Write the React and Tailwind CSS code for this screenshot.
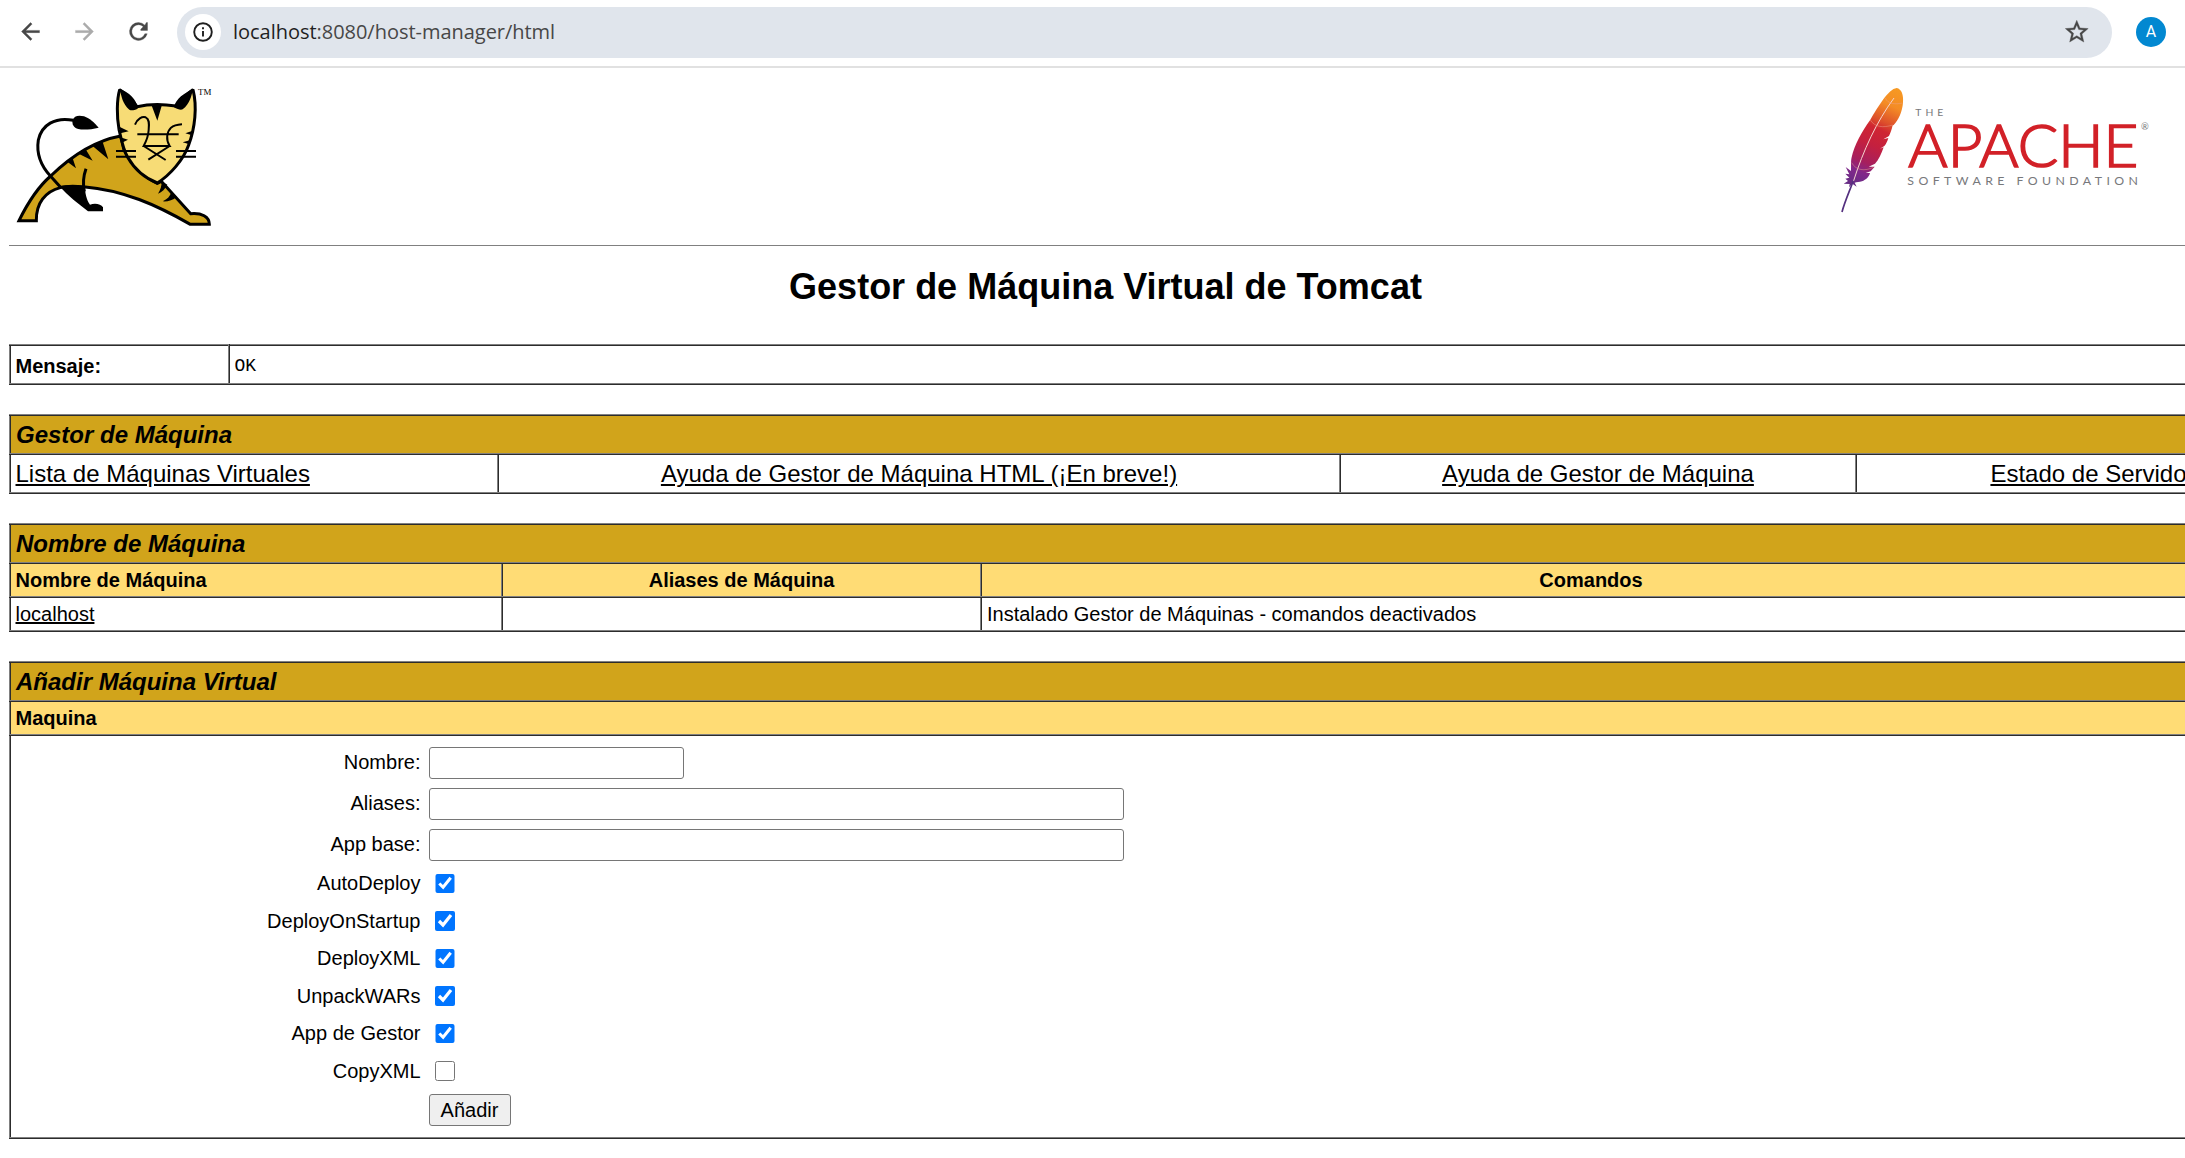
import React from "react";

const CELL = "border-2 border-[#808080] [border-style:ridge] px-[4.5px] py-0 align-middle whitespace-nowrap";

function Icon({ d, size, className }) {
  return (
    <svg width={size} height={size} viewBox="0 0 24 24" fill="currentColor" stroke="currentColor" strokeWidth="0.3" className={className}>
      <path d={d} />
    </svg>
  );
}

const BACK = "M20 11H7.83l5.59-5.59L12 4l-8 8 8 8 1.41-1.41L7.83 13H20v-2z";
const FORWARD = "M12 4l-1.41 1.41L16.17 11H4v2h12.17l-5.58 5.59L12 20l8-8z";
const RELOAD = "M17.65 6.35A7.96 7.96 0 0 0 12 4a8 8 0 1 0 7.73 10h-2.08A5.99 5.99 0 1 1 12 6c1.66 0 3.14.69 4.22 1.78L14 10v1h6V4h-1z";
const STAR = "M22 9.24l-7.19-.62L12 2 9.19 8.63 2 9.24l5.46 4.73L5.82 21 12 17.27 18.18 21l-1.63-7.03L22 9.24zM12 15.4l-3.76 2.27 1-4.28-3.32-2.88 4.38-.38L12 6.1l1.71 4.04 4.38.38-3.32 2.88 1 4.28L12 15.4z";

function Toolbar() {
  return (
    <div className="flex h-[68px] w-full items-center border-b-2 border-[#e1e1e1] bg-white pb-[3px]">
      <div className="flex w-[177px] items-center pl-[16.5px] text-[#474747]">
        <Icon d={BACK} size={27} />
        <Icon d={FORWARD} size={27} className="ml-[27px] text-[#ababab]" />
        <Icon d={RELOAD} size={27} className="ml-[27px]" />
      </div>
      <div className="mt-px flex h-[51px] w-[1935px] items-center rounded-full bg-[#e0e5ec]">
        <div className="ml-[8px] flex h-[36px] w-[36px] items-center justify-center rounded-full bg-white">
          <svg width="20" height="20" viewBox="0 0 20 20" fill="none" stroke="#1f1f1f">
            <circle cx="10" cy="10" r="8.8" strokeWidth="1.9" />
            <path d="M10 9v5.6M10 5.2v2" strokeWidth="1.9" />
          </svg>
        </div>
        <span className="ml-[12px] font-['Open_Sans',sans-serif] text-[20px] tracking-[-0.03px] whitespace-nowrap text-[#474747]">
          <span className="text-[#1f1f1f]">localhost</span>:8080/host-manager/html
        </span>
        <Icon d={STAR} size={27.5} className="mr-[22px] mb-px ml-auto text-[#474747]" />
      </div>
      <div className="ml-[24px] flex h-[30px] w-[30px] items-center justify-center rounded-full bg-[#0288d1] font-[Roboto,sans-serif] text-[16px] text-white">
        A
      </div>
    </div>
  );
}

function TomcatLogo() {
  return (
    <svg width="240" height="170" viewBox="0 0 720 510" fill="none" stroke="#000" strokeWidth="9">
      <path
        fill="#d1a41b"
        d="M57 452C85 395 115 350 152 318C210 262 285 212 362 198L372 240C400 290 430 320 472 340L484 334L572 431C605 428 628 440 628 463H571C470 405 370 360 250 350C215 347 195 348 181 353C135 365 108 400 109 452Z"
      />
      <path d="M220 151C165 140 125 165 115 210C108 255 125 290 152 319L181 351" strokeWidth="9" />
      <path fill="#000" stroke="none" d="M218 150C222 138 235 134 252 139C270 145 284 160 296 173C275 178 250 181 235 177C221 173 215 163 218 150Z" />
      <path fill="#000" stroke="none" d="M178 349C200 343 235 346 254 349C256 370 259 390 270 404C285 398 303 402 309 412V424H264C235 402 205 378 178 349Z" />
      <path d="M258 296C250 318 249 345 253 365" />
      <path fill="#000" stroke="none" d="M277 227L307 213L325 268ZM236 251L257 238L278 272ZM202 275L217 262L228 295ZM484 334L502 344C496 356 486 366 474 371C482 359 486 347 484 334ZM514 366L530 380C518 391 504 395 488 394C502 388 511 378 514 366Z" />
      <path
        fill="#f7dc76"
        strokeLinejoin="bevel"
        d="M359 59C350 90 350 140 357 178C365 215 370 240 383 262C405 300 435 325 472 339C510 315 550 270 566 225C585 175 592 110 579 59C560 75 540 90 528 108C490 102 450 101 411 110C397 90 380 72 359 59Z"
      />
      <path fill="#000" stroke="none" d="M359 56C385 66 412 88 413 116C402 121 394 122 388 119C368 102 364 78 359 56ZM579 56C555 68 526 86 522 112C532 118 543 121 548 118C570 100 574 80 579 56ZM454 104H486L472 152ZM358 170L386 184L361 190ZM361 202L384 209L364 219ZM578 182L556 190L576 196ZM572 210L548 217L568 223Z" />
      <path strokeWidth="6" d="M405 164C412 146 426 139 437 142C448 147 448 160 446 180C445 198 438 215 431 228H509C497 210 500 186 513 173C523 165 535 164 546 163M412 193H536M431 228L497 270M509 228L445 269M348 243H408M348 260H408M528 243H588M528 260H588" />
      <text x="594" y="76" fill="#000" stroke="none" fontSize="27" textLength="40" lengthAdjust="spacingAndGlyphs" fontFamily="Liberation Serif, serif">
        TM
      </text>
    </svg>
  );
}

function ApacheLogo() {
  return (
    <svg width="365" height="175" viewBox="0 0 1095 525">
      <defs>
        <linearGradient id="feather" gradientUnits="userSpaceOnUse" x1="228" y1="55" x2="100" y2="345">
          <stop offset="0" stopColor="#f69923" />
          <stop offset="0.17" stopColor="#f48c25" />
          <stop offset="0.34" stopColor="#dd4f2b" />
          <stop offset="0.42" stopColor="#cf2532" />
          <stop offset="0.58" stopColor="#c4203f" />
          <stop offset="0.76" stopColor="#a61f5e" />
          <stop offset="0.86" stopColor="#82288a" />
          <stop offset="1" stopColor="#662c85" />
        </linearGradient>
      </defs>
      <path
        fill="url(#feather)"
        d="M230 54C245 57 251 75 249 98C247 125 235 150 221 165L205 173L218 166C215 180 211 190 207 198L190 208L205 204C202 215 198 222 193 228L180 236L191 232C184 252 176 270 165 281L146 290H164L152 304L137 309L150 309C148 320 138 329 126 334C118 337 110 336 104 338L110 350L97 341L87 352L89 342L71 341L84 333L76 326L88 323L76 311L88 313L77 291L93 303C94 285 92 275 95 262C103 225 125 185 151 149C175 110 205 57 230 54Z"
      />
      <path d="M222 84C170 155 130 240 100 335" stroke="#f6d5cf" strokeWidth="3" fill="none" />
      <path d="M196 84C203 102 225 104 248 99M151 150C165 172 190 174 218 165M95 278C108 302 135 304 160 292" stroke="#eda08c" strokeWidth="2" fill="none" opacity="0.7" />
      <path d="M100 332C88 365 74 395 66 426" stroke="#54307f" strokeWidth="5" fill="none" />
      <g fontFamily="Lato, sans-serif">
        <text x="286" y="138" fontSize="31" fill="#77787b" textLength="84">THE</text>
        <text x="265" y="291" fontSize="176" fontWeight="300" stroke="#d22128" strokeWidth="5" fill="#d22128" textLength="690" lengthAdjust="spacingAndGlyphs">APACHE</text>
        <text x="262" y="346" fontSize="37" fill="#77787b" textLength="692">SOFTWARE FOUNDATION</text>
        <text x="963" y="180" fontSize="28" fill="#77787b">®</text>
      </g>
    </svg>
  );
}

function SectionTitle({ span, children }) {
  return (
    <tr className="h-[39px] bg-[#d1a41b]">
      <td colSpan={span} className={CELL + " pl-[5px] text-[24px] font-bold italic"}>{children}</td>
    </tr>
  );
}

function TextField({ label, wide }) {
  return (
    <label className="flex h-[41px] items-center">
      <span className="w-[405px] text-right">{label}</span>
      <input type="text" className={wide ? "mt-[2px] ml-[8px] h-[32px] w-[695px] rounded-[3px] border border-[#767676] bg-white" : "mt-[2px] ml-[8px] h-[32px] w-[255px] rounded-[3px] border border-[#767676] bg-white"} />
    </label>
  );
}

const OPTIONS = [
  ["AutoDeploy", true],
  ["DeployOnStartup", true],
  ["DeployXML", true],
  ["UnpackWARs", true],
  ["App de Gestor", true],
  ["CopyXML", false],
];

const TABLE = "w-[2193px] table-fixed border-collapse text-[20px]";

export default function App() {
  return (
    <div className="h-[1158px] w-full overflow-hidden bg-white font-['Liberation_Sans',Arial,sans-serif] text-black">
      <Toolbar />
      <div className="flex h-[177px] items-start justify-between pt-[2px]">
        <TomcatLogo />
        <ApacheLogo />
      </div>
      <div className="ml-[9px] w-[2193px]">
        <div className="h-px bg-[#808080]" />
        <h1 className="flex h-[98px] items-center justify-center pb-[17px] text-[36px] font-bold">
          Gestor de Máquina Virtual de Tomcat
        </h1>

        <table className={TABLE + " mb-[29px]"}>
          <colgroup><col className="w-[219px]" /><col /></colgroup>
          <tbody>
            <tr className="h-[39px]">
              <td className={CELL + " pt-[3px] font-bold"}>Mensaje:</td>
              <td className={CELL + " pt-[3px] font-['Liberation_Mono',monospace] text-[18px]"}>OK</td>
            </tr>
          </tbody>
        </table>

        <table className={TABLE + " mb-[29px]"}>
          <colgroup><col className="w-[488px]" /><col className="w-[842px]" /><col className="w-[516px]" /><col className="w-[346px]" /></colgroup>
          <tbody>
            <SectionTitle span={4}>Gestor de Máquina</SectionTitle>
            <tr className="h-[39px] text-[24px]">
              <td className={CELL}><a className="underline">Lista de Máquinas Virtuales</a></td>
              <td className={CELL + " text-center"}><a className="underline">Ayuda de Gestor de Máquina HTML (¡En breve!)</a></td>
              <td className={CELL + " text-center"}><a className="underline">Ayuda de Gestor de Máquina</a></td>
              <td className={CELL + " pr-[6.5px] text-right"}><a className="underline">Estado de Servidor</a></td>
            </tr>
          </tbody>
        </table>

        <table className={TABLE + " mb-[29px]"}>
          <colgroup><col className="w-[492px]" /><col className="w-[479px]" /><col /></colgroup>
          <tbody>
            <SectionTitle span={3}>Nombre de Máquina</SectionTitle>
            <tr className="h-[34px] bg-[#ffdc75] font-bold">
              <td className={CELL}>Nombre de Máquina</td>
              <td className={CELL + " text-center"}>Aliases de Máquina</td>
              <td className={CELL + " text-center"}>Comandos</td>
            </tr>
            <tr className="h-[34px]">
              <td className={CELL}><a className="underline">localhost</a></td>
              <td className={CELL} />
              <td className={CELL + " pl-[5px]"}>Instalado Gestor de Máquinas - comandos deactivados</td>
            </tr>
          </tbody>
        </table>

        <table className={TABLE}>
          <tbody>
            <SectionTitle span={1}>Añadir Máquina Virtual</SectionTitle>
            <tr className="h-[34px] bg-[#ffdc75] font-bold">
              <td className={CELL}>Maquina</td>
            </tr>
            <tr className="h-[403px]">
              <td className={CELL + " align-top"}>
                <form className="pt-[5.5px]">
                  <TextField label="Nombre:" />
                  <TextField label="Aliases:" wide />
                  <TextField label="App base:" wide />
                  {OPTIONS.map(([name, on]) => (
                    <label key={name} className="flex h-[37.5px] items-center">
                      <span className="w-[405px] text-right">{name}</span>
                      <input type="checkbox" defaultChecked={on} className="ml-[14.5px] h-[19.5px] w-[19.5px]" />
                    </label>
                  ))}
                  <button type="button" className="mt-[4px] ml-[413px] block h-[32px] w-[82px] rounded-[3px] border border-[#767676] bg-[#efefef] text-[20px] leading-[28px]">
                    Añadir
                  </button>
                </form>
              </td>
            </tr>
          </tbody>
        </table>
      </div>
    </div>
  );
}
